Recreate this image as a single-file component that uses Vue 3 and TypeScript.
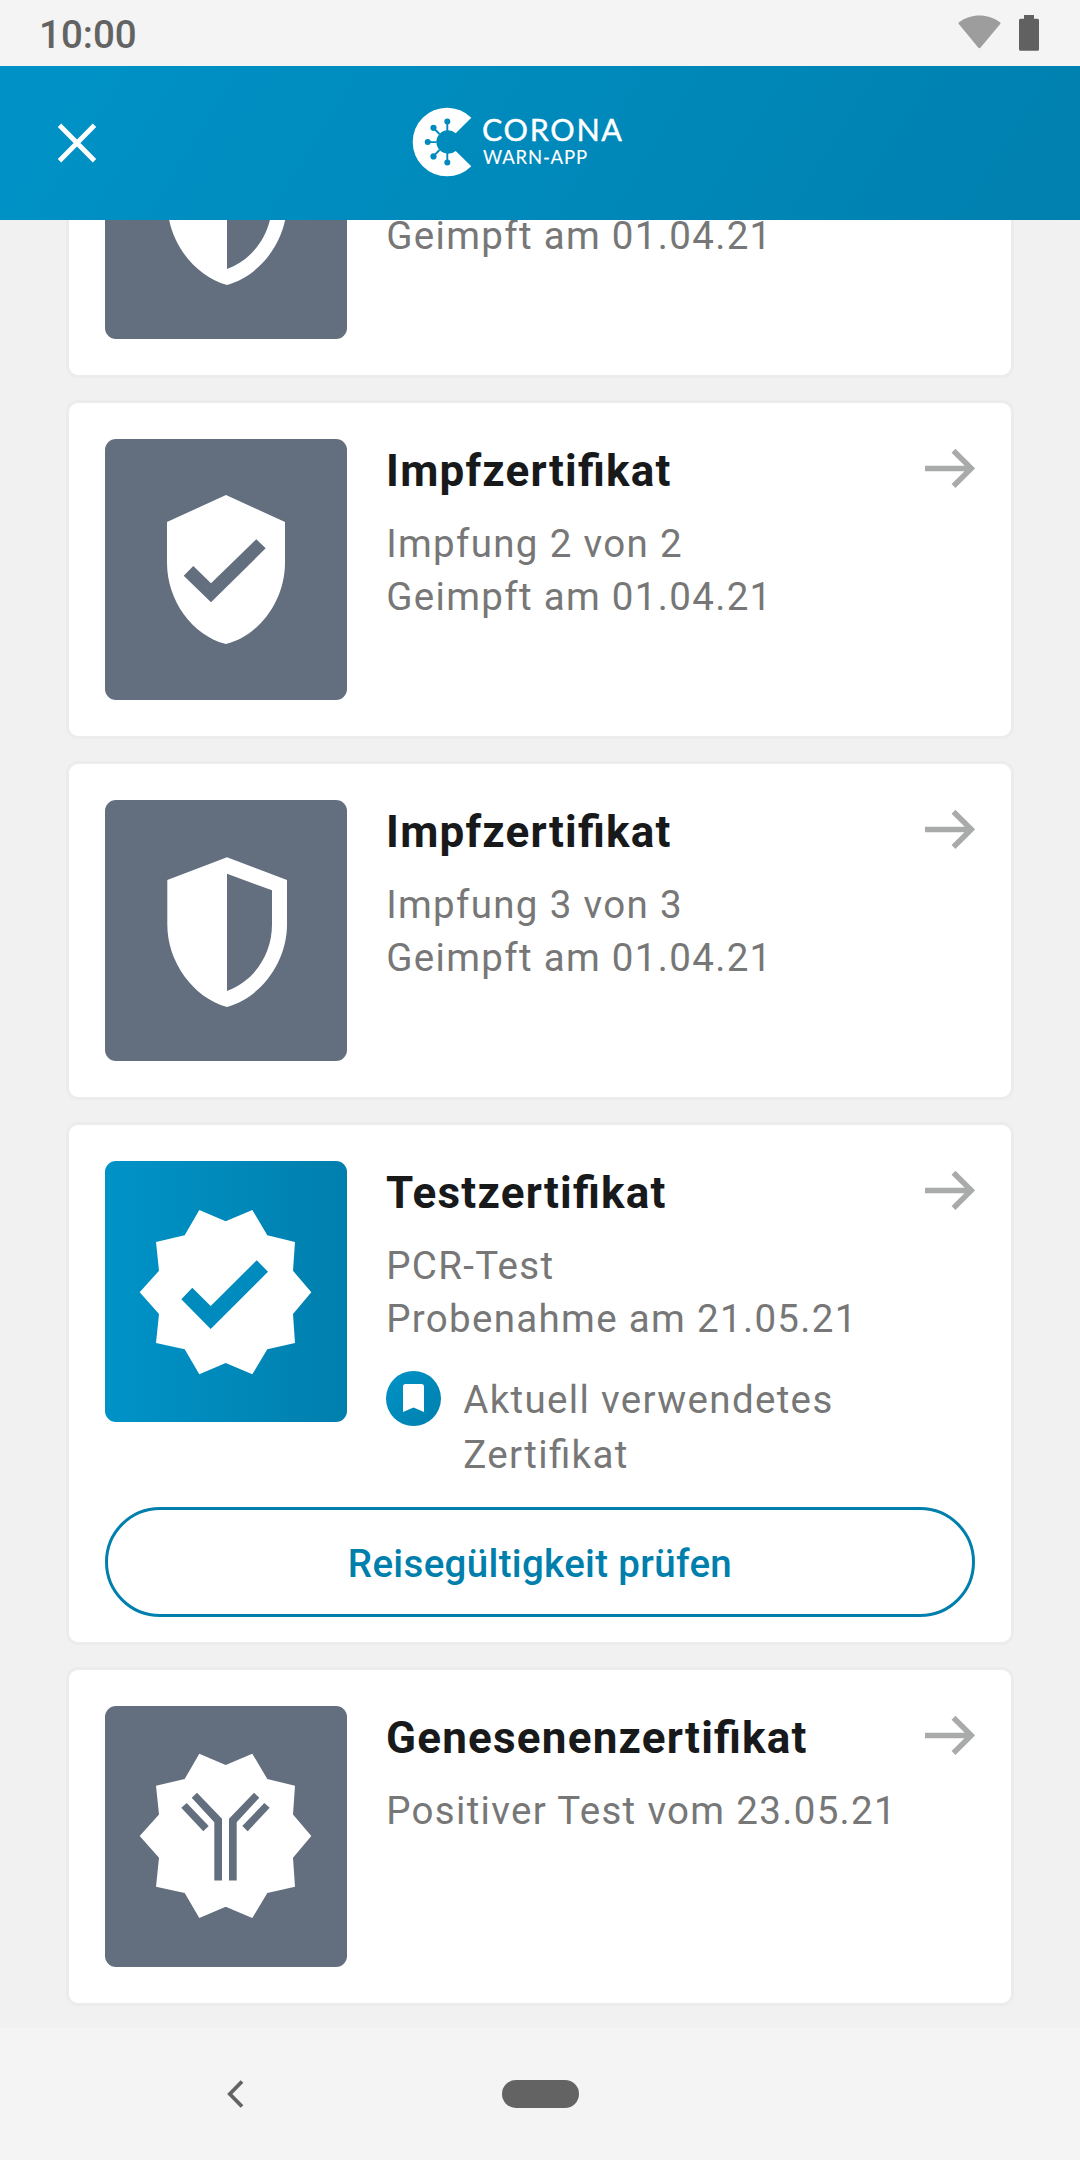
<script setup lang="ts">
type IconKind = 'shield-half' | 'shield-check' | 'seal-check' | 'seal-antibody'

interface Certificate {
  id: number
  icon: IconKind
  title: string
  lines: string[]
  current?: boolean
}

// The first entry is scrolled under the header; only its last line is on screen.
const certificates: Certificate[] = [
  { id: 1, icon: 'shield-half', title: '', lines: ['', 'Geimpft am 01.04.21'] },
  { id: 2, icon: 'shield-check', title: 'Impfzertifikat', lines: ['Impfung 2 von 2', 'Geimpft am 01.04.21'] },
  { id: 3, icon: 'shield-half', title: 'Impfzertifikat', lines: ['Impfung 3 von 3', 'Geimpft am 01.04.21'] },
  { id: 4, icon: 'seal-check', title: 'Testzertifikat', lines: ['PCR-Test', 'Probenahme am 21.05.21'], current: true },
  { id: 5, icon: 'seal-antibody', title: 'Genesenenzertifikat', lines: ['Positiver Test vom 23.05.21'] },
]

const sealPoints =
  '120.7,60.3 147.3,49 162.3,74.3 190,81 188,109.7 206.3,131.3 188,153 190,182 162.3,188.3 147.3,213.3 ' +
  '120.7,202 94.3,213.3 79.7,188.3 51,182 54,153 34.7,131.3 54,109.7 51,81 79.7,74.3 94.3,49'
</script>

<template>
  <div class="screen">
    <div class="status">
      <span class="clock">10:00</span>
      <div class="status-icons">
        <svg class="wifi" width="43" height="34" viewBox="0 0 43 34">
          <path d="M1 7.2C7 2.6 14 .4 21.4.4S36 2.6 42 7.2c.6.5.7 1.200.2 1.800L22.600 32.600c-.7.8-1.700.8-2.400 0L.8 9C.3 8.400.4 7.700 1 7.200Z" fill="#9d9d9d" />
        </svg>
        <svg class="battery" width="20" height="36" viewBox="0 0 20 36">
          <path d="M5 0h10v3.700h3.500q1.500 0 1.500 1.500v29q0 1.500-1.500 1.500h-17Q0 35.700 0 34.200v-29q0-1.500 1.500-1.500H5Z" fill="#616161" />
        </svg>
      </div>
    </div>

    <header class="header">
      <button class="close" type="button" aria-label="Schließen">
        <svg width="40" height="40" viewBox="0 0 40 40">
          <path d="M2.500 2.200 37.500 37.800M37.500 2.200 2.500 37.800" stroke="#fff" stroke-width="4.800" fill="none" />
        </svg>
      </button>
      <svg class="logo" width="212" height="72" viewBox="412 105.500 212 72">
        <path d="M471.300 117.300A34.300 34.300 0 1 0 471.300 165.700L455.700 150.400A11.700 11.700 0 1 1 455.700 132.700Z" fill="#fff" />
        <g stroke="#008abd" stroke-width="1.900">
          <path d="M447.300 131V121M439.500 133.500 433.500 127.500M436.500 141.600H428M439.500 149.500 433.500 155.700M447.300 152V161.500" />
        </g>
        <g fill="#008abd">
          <circle cx="447.300" cy="121" r="3" />
          <circle cx="433.500" cy="127.300" r="3.100" />
          <circle cx="427.700" cy="141.600" r="3" />
          <circle cx="433.500" cy="155.900" r="3.100" />
          <circle cx="447.300" cy="161.900" r="3" />
        </g>
        <text class="logo-text" x="482" y="140" font-size="30.500" textLength="140">CORONA</text>
        <text class="logo-text small" x="483" y="163.600" font-size="18.500" textLength="104">WARN-APP</text>
      </svg>
    </header>

    <main class="content">
      <article v-for="cert in certificates" :key="cert.id" class="card">
        <div class="row">
          <div class="thumb" :class="{ active: cert.current }">
            <svg width="242" height="261" viewBox="0 0 242 261" fill="#fff">
              <path
                v-if="cert.icon === 'shield-half'"
                fill-rule="evenodd"
                d="M122 57.300 62.300 80V124.500C62.300 162 88 197.500 122 207C156 197.500 182 162 182 124.500V80ZM122 73.700 167 90.300V124.500C167 155 148.500 181.500 122 191Z"
              />
              <path
                v-else-if="cert.icon === 'shield-check'"
                fill-rule="evenodd"
                d="M121 56 62 83V123.700C62 161.300 87.200 196.400 121 205C154.800 196.400 180 161.300 180 123.700V83ZM88.300 127 106 144.300 151.300 100.300 160.700 109.300 106 163.300 78.700 136.700Z"
              />
              <template v-else-if="cert.icon === 'seal-check'">
                <polygon :points="sealPoints" />
                <path fill="#008bbf" d="M87.300 126.700 105.700 145 151.700 99.300 163 110.700 105.700 168 76.300 138.300Z" />
              </template>
              <template v-else>
                <polygon :points="sealPoints" transform="translate(0 -1.300)" />
                <g fill="#636f7f">
                  <path d="M92 86.700 117 112.700V174.500H109.300V116.300L86.700 91.700Z" />
                  <path d="M149 86.700 124 112.700V174.500H131.700V116.300L154.300 91.700Z" />
                  <path d="M81.700 97 103.700 120 98.300 125.300 76.300 101.700Z" />
                  <path d="M159.300 97 137.300 120 142.700 125.300 164.700 101.700Z" />
                </g>
              </template>
            </svg>
          </div>
          <div class="info">
            <div class="head">
              <h2 class="title">{{ cert.title }}</h2>
              <svg class="arrow" width="50" height="40" viewBox="0 0 50 40">
                <path d="M0 20.400H46M28.500 2.800 46.200 20.400 28.500 38" fill="none" stroke="#a9abaa" stroke-width="5.500" />
              </svg>
            </div>
            <p v-for="line in cert.lines" :key="line" class="line">{{ line }}</p>
            <div v-if="cert.current" class="current">
              <span class="badge">
                <svg width="21" height="28" viewBox="0 0 21 28">
                  <path d="M2.500 0h16q2.500 0 2.500 2.500V28L10.500 23.500 0 28V2.500Q0 0 2.500 0Z" fill="#fff" />
                </svg>
              </span>
              <span class="current-text">Aktuell verwendetes Zertifikat</span>
            </div>
          </div>
        </div>
        <button v-if="cert.current" class="check" type="button">Reisegültigkeit prüfen</button>
      </article>
    </main>

    <nav class="nav">
      <svg class="back" width="17" height="28" viewBox="0 0 17 28">
        <path d="M15 1.500 2.800 14 15 26.500" fill="none" stroke="#636363" stroke-width="3.800" />
      </svg>
      <span class="home"></span>
    </nav>
  </div>
</template>

<style>
body {
  margin: 0;
}
</style>

<style scoped>
.screen {
  display: flex;
  flex-direction: column;
  width: 1080px;
  height: 2160px;
  overflow: hidden;
  background: #f1f1f1;
  font-family: Roboto, "Noto Sans", sans-serif;
}

.status {
  display: flex;
  flex: none;
  justify-content: space-between;
  height: 66px;
  padding: 0 41px 0 39px;
  box-sizing: border-box;
  background: #f4f4f4;
}

.clock {
  font-size: 38.5px;
  font-weight: 500;
  line-height: 70px;
  color: #636363;
}

.status-icons {
  display: flex;
  align-items: flex-start;
  gap: 18px;
  padding-top: 15px;
}

.header {
  display: flex;
  flex: none;
  align-items: center;
  height: 154px;
  padding-left: 57px;
  background: linear-gradient(122deg, #0093c8 -3%, #007fad 106%);
}

.close {
  display: flex;
  padding: 0;
  border: 0;
  background: none;
}

.logo {
  margin: -3px 0 0 315px;
}

.logo-text {
  font-family: Lato, "Open Sans", sans-serif;
  font-weight: 400;
  fill: #fff;
  stroke: #fff;
  stroke-width: 0.4px;
}

.logo-text.small {
  stroke-width: 0.1px;
}

.content {
  display: flex;
  flex: 1;
  flex-direction: column;
  justify-content: flex-end;
  gap: 22px;
  min-height: 0;
  padding: 0 66px 22px;
  overflow: hidden;
}

.card {
  display: flex;
  flex: none;
  flex-direction: column;
  gap: 25px;
  padding: 36px;
  border: 3px solid #ececec;
  border-radius: 12px;
  background: #fff;
}

.card:has(.check) {
  padding-bottom: 25px;
}

.row {
  display: flex;
  gap: 38.5px;
}

.thumb {
  flex: none;
  width: 242px;
  height: 261px;
  border-radius: 11px;
  overflow: hidden;
  background: #636f7f;
}

.thumb.active {
  background: linear-gradient(90deg, #0093c8, #007fad);
}

.thumb svg {
  display: block;
}

.info {
  flex: 1;
  min-width: 0;
}

.head {
  display: flex;
  justify-content: space-between;
  align-items: flex-start;
  padding-top: 6px;
  margin-bottom: 20px;
}

.title {
  min-height: 52px;
  margin: 0;
  padding-left: 0.6px;
  font-size: 44px;
  font-weight: 700;
  line-height: 52px;
  letter-spacing: 1.2px;
  font-feature-settings: "liga" 1;
  color: #18191b;
}

.arrow {
  margin-top: 3px;
}

.line {
  min-height: 53px;
  margin: 0;
  padding-left: 0.7px;
  font-size: 38.5px;
  line-height: 53px;
  letter-spacing: 1.32px;
  white-space: nowrap;
  color: #777;
}

.current {
  display: flex;
  gap: 22px;
  padding-top: 26px;
}

.badge {
  display: flex;
  flex: none;
  align-items: center;
  justify-content: center;
  width: 55px;
  height: 55px;
  margin-bottom: auto;
  border-radius: 50%;
  background: linear-gradient(135deg, #0093c8, #007fad);
}

.badge svg {
  margin-top: -2px;
}

.current-text {
  padding: 1px 0 0 0.7px;
  font-size: 38.5px;
  line-height: 55px;
  letter-spacing: 1.34px;
  font-feature-settings: "liga" 1;
  color: #777;
}

.check {
  height: 110px;
  padding: 2px 0 0;
  border: 3px solid #007fad;
  border-radius: 55px;
  background: #fff;
  color: #007fad;
  font-family: inherit;
  font-size: 38.5px;
  font-weight: 500;
  letter-spacing: 0.33px;
}

.nav {
  display: flex;
  flex: none;
  align-items: center;
  gap: 258px;
  height: 132px;
  padding-left: 227px;
  background: #f4f4f4;
}

.home {
  width: 77px;
  height: 28px;
  border-radius: 14px;
  background: #636363;
}
</style>
